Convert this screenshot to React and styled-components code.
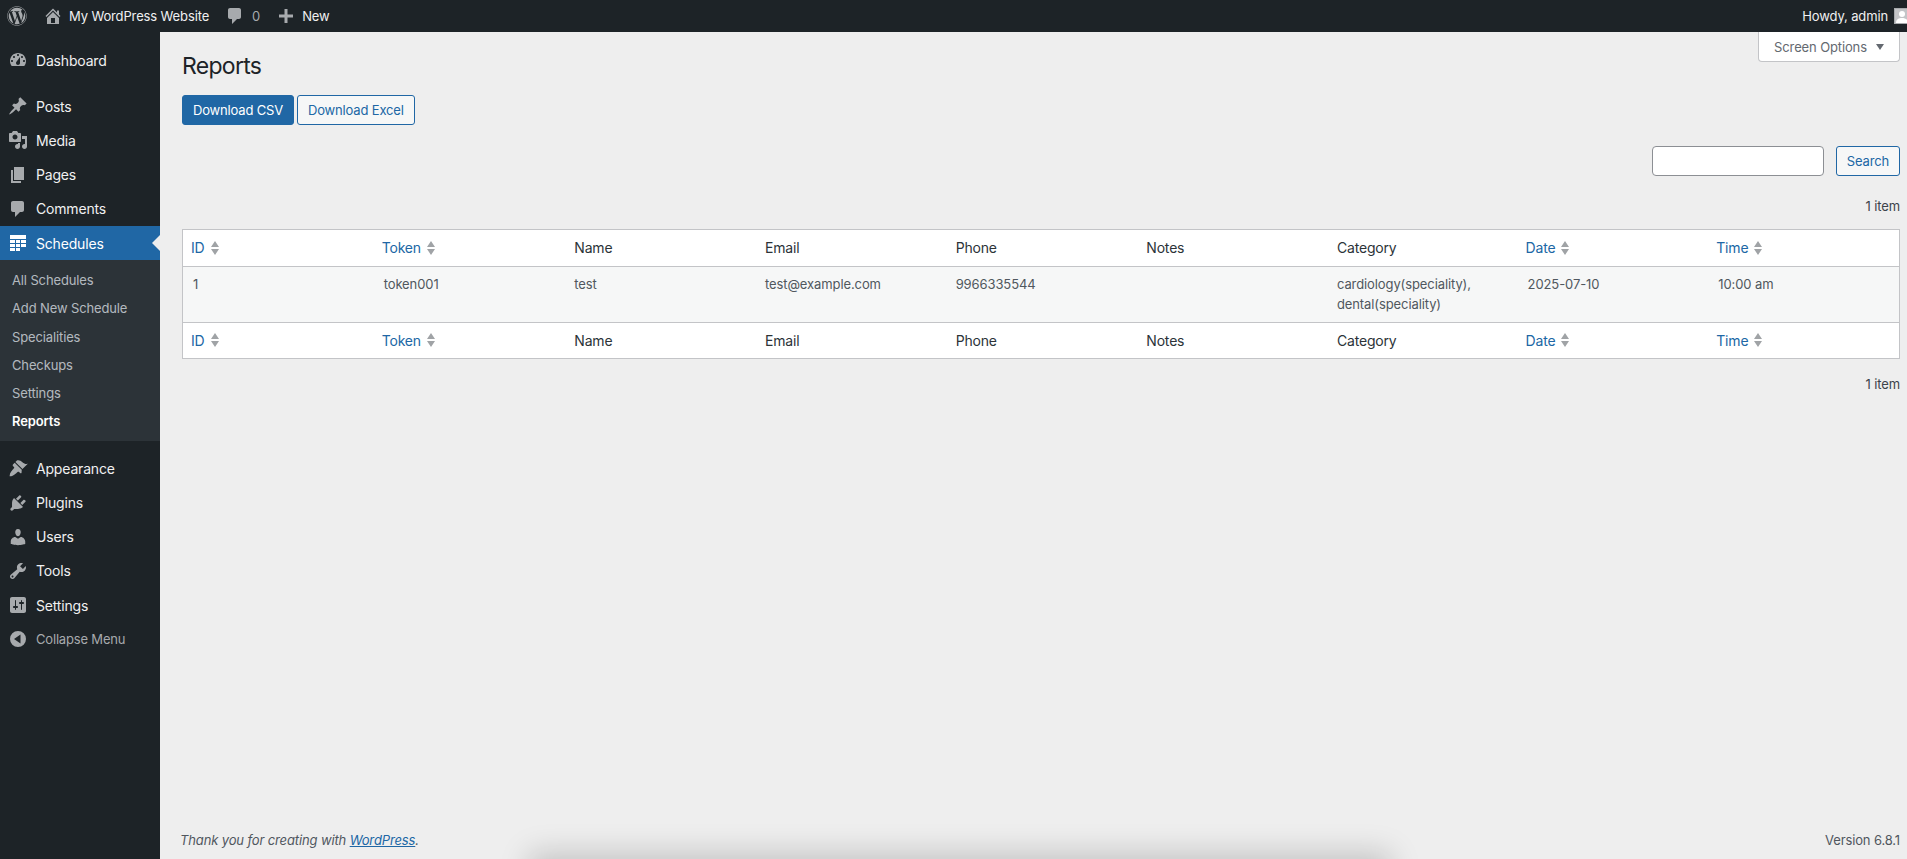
import styled, { createGlobalStyle } from "styled-components"
import { FaWordpress } from "react-icons/fa"

const BLUE = "#2067a5"

const icons = {
  home: "M16 8.5l1.53 1.53-1.06 1.06L10 4.62l-6.47 6.47-1.06-1.06L10 2.5l4 4v-2h2v4zm-6-2.46l6 5.99V18H4v-5.97zM12 17v-5H8v5h4z",
  comment: "M5 2h9c1.1 0 2 .9 2 2v7c0 1.1-.9 2-2 2h-2l-5 5v-5H5c-1.1 0-2-.9-2-2V4c0-1.1.9-2 2-2z",
  plus: "M17 8.5v3h-5.5V17h-3v-5.5H3v-3h5.5V3h3v5.5z",
  dashboard: "M3.76 16h12.48c1.1-1.37 1.76-3.11 1.76-5 0-4.42-3.58-8-8-8s-8 3.58-8 8c0 1.89.66 3.63 1.76 5zM10 4c.55 0 1 .45 1 1s-.45 1-1 1-1-.45-1-1 .45-1 1-1zM6 6c.55 0 1 .45 1 1s-.45 1-1 1-1-.45-1-1 .45-1 1-1zm8 0c.55 0 1 .45 1 1s-.45 1-1 1-1-.45-1-1 .45-1 1-1zm-5.37 5.55L12 7v6c0 1.1-.9 2-2 2s-2-.9-2-2c0-.57.24-1.08.63-1.45zM4 10c.55 0 1 .45 1 1s-.45 1-1 1-1-.45-1-1 .45-1 1-1zm12 0c.55 0 1 .45 1 1s-.45 1-1 1-1-.45-1-1 .45-1 1-1z",
  post: "M10.44 3.02l1.82-1.82 6.36 6.35-1.83 1.82c-1.05-.68-2.48-.57-3.41.36l-.75.75c-.92.93-1.04 2.35-.35 3.41l-1.83 1.82-2.41-2.41-2.8 2.79c-.42.42-3.38 2.71-3.8 2.29s1.86-3.39 2.28-3.81l2.79-2.79L4.1 9.36l1.83-1.82c1.05.69 2.48.57 3.4-.36l.75-.75c.93-.92 1.05-2.35.36-3.41z",
  media: "M13 11V4c0-.55-.45-1-1-1h-1.67L9 1H5L3.67 3H2c-.55 0-1 .45-1 1v7c0 .55.45 1 1 1h10c.55 0 1-.45 1-1zM7 4.5c1.38 0 2.5 1.12 2.5 2.5S8.38 9.5 7 9.5 4.5 8.38 4.5 7 5.62 4.5 7 4.5zM14 6h5v10.5c0 1.38-1.12 2.5-2.5 2.5S14 17.88 14 16.5s1.12-2.5 2.5-2.5c.17 0 .34.02.5.05V9h-3V6zm-4 8.05V13h2v3.5c0 1.38-1.12 2.5-2.5 2.5S7 17.88 7 16.5 8.12 14 9.5 14c.17 0 .34.02.5.05z",
  page: "M6 15V2h10v13H6zm-1 1h8v2H3V5h2v11z",
  schedule: "M2 2h16v4H2V2zm0 5h5v3H2V7zm6 0h4v3H8V7zm5 0h5v3h-5V7zM2 11h5v3H2v-3zm6 0h4v3H8v-3zM2 15h5v3H2v-3zm6 0h4v3H8v-3zm5-4h5v3h-5v-3z",
  appearance: "M14.48 11.06L7.41 3.99l1.5-1.5c.5-.56 2.3-.47 3.51.32 1.21.8 1.43 1.28 2.91 2.1 1.18.64 2.45 1.26 4.45.85zM13.77 11.77L6.7 4.7 4.93 6.47c-.39.39-.39 1.02 0 1.41l1.06 1.06c.39.39.39 1.03 0 1.42-.6.6-3.6 4-4 5.64-.5 2-.3 2.3-.3 2.3s.3.2 2.3-.3c1.64-.4 5.04-3.4 5.64-4 .39-.39 1.03-.39 1.42 0l1.06 1.06c.39.39 1.02.39 1.41 0z",
  plugin: "M13.11 4.36L9.87 7.6 8 5.73l3.24-3.24c.35-.34 1.05-.2 1.56.32.52.51.66 1.21.31 1.55zm-8 1.77l.91-1.12 9.01 9.01-1.19.84c-.71.71-2.63 1.16-3.82 1.16H6.14L4.9 17.26c-.59.59-1.54.59-2.12 0-.59-.58-.59-1.53 0-2.12l1.24-1.24v-3.88c0-1.13.4-3.19 1.09-3.89zm7.26 3.97l3.24-3.24c.34-.35 1.04-.21 1.55.31.52.51.66 1.21.31 1.55l-3.24 3.25z",
  users: "M10 9.25c-2.27 0-2.73-3.44-2.73-3.44C7 4.02 7.82 2 9.97 2c2.16 0 2.98 2.02 2.71 3.81 0 0-.41 3.44-2.68 3.44zm0 2.57L12.72 10c2.39 0 4.52 2.33 4.52 4.53v2.49s-3.65 1.13-7.24 1.13c-3.65 0-7.24-1.13-7.24-1.13v-2.49c0-2.25 1.94-4.48 4.47-4.48z",
  tools: "M16.68 9.77c-1.34 1.34-3.3 1.67-4.95.99l-5.41 6.52c-.99.99-2.59.99-3.58 0s-.99-2.59 0-3.57l6.52-5.42c-.68-1.65-.35-3.61.99-4.95 1.28-1.28 3.12-1.62 4.72-1.06l-2.89 2.89 2.82 2.82 2.86-2.87c.53 1.58.18 3.39-1.08 4.65zM3.81 16.21c.4.39 1.04.39 1.43 0 .4-.4.4-1.04 0-1.43-.39-.4-1.03-.4-1.43 0-.39.39-.39 1.03 0 1.43z",
  settings: "M18 16V4c0-1.1-.9-2-2-2H4c-1.1 0-2 .9-2 2v12c0 1.1.9 2 2 2h12c1.1 0 2-.9 2-2zM8 11h1c.55 0 1 .45 1 1s-.45 1-1 1H8v1.5c0 .28-.22.5-.5.5s-.5-.22-.5-.5V13H6c-.55 0-1-.45-1-1s.45-1 1-1h1V5.5c0-.28.22-.5.5-.5s.5.22.5.5V11zm5-2h-1c-.55 0-1-.45-1-1s.45-1 1-1h1V5.5c0-.28.22-.5.5-.5s.5.22.5.5V7h1c.55 0 1 .45 1 1s-.45 1-1 1h-1v5.5c0 .28-.22.5-.5.5s-.5-.22-.5-.5V9z",
  collapse: "M10 2a8 8 0 1 0 0 16 8 8 0 0 0 0-16zm2.5 3.5v9L6 10z",
}

const menuTop = [
  { label: "Posts", icon: "post" },
  { label: "Media", icon: "media" },
  { label: "Pages", icon: "page" },
  { label: "Comments", icon: "comment" },
]
const menuBottom = [
  { label: "Appearance", icon: "appearance" },
  { label: "Plugins", icon: "plugin" },
  { label: "Users", icon: "users" },
  { label: "Tools", icon: "tools" },
  { label: "Settings", icon: "settings" },
]
const subItems = ["All Schedules", "Add New Schedule", "Specialities", "Checkups", "Settings"]
const columns = [
  { label: "ID", sortable: true },
  { label: "Token", sortable: true },
  { label: "Name" },
  { label: "Email" },
  { label: "Phone" },
  { label: "Notes" },
  { label: "Category" },
  { label: "Date", sortable: true },
  { label: "Time", sortable: true },
]
const row = ["1", "token001", "test", "test@example.com", "9966335544", "", "cardiology(speciality), dental(speciality)", "2025-07-10", "10:00 am"]

function Dashicon({ name, size = 20 }) {
  return (
    <svg width={size} height={size} viewBox="0 0 20 20" fill="currentColor" fillRule="evenodd">
      <path d={icons[name]} />
    </svg>
  )
}

function SortArrows() {
  return (
    <SortSvg width="8" height="14" viewBox="0 0 8 14" fill="#a0a3a6">
      <path d="M4 0l4 6H0zM4 14L0 8h8z" />
    </SortSvg>
  )
}

function HeaderRow({ height }) {
  return (
    <tr>
      {columns.map((col) =>
        col.sortable ? (
          <SortTh key={col.label} $height={height}>
            <SortLink href="#">
              {col.label}
              <SortArrows />
            </SortLink>
          </SortTh>
        ) : (
          <Th key={col.label} $height={height}>
            {col.label}
          </Th>
        )
      )}
    </tr>
  )
}

export default function App() {
  return (
    <>
      <GlobalStyle />
      <AdminBar>
        <BarGroup>
          <LogoSlot>
            <FaWordpress size={20} />
          </LogoSlot>
          <BarItem>
            <BarIcon>
              <Dashicon name="home" />
            </BarIcon>
            My WordPress Website
          </BarItem>
          <BarItem>
            <BarIcon>
              <Dashicon name="comment" />
            </BarIcon>
            <Count>0</Count>
          </BarItem>
          <BarItem>
            <BarIcon>
              <Dashicon name="plus" />
            </BarIcon>
            New
          </BarItem>
        </BarGroup>
        <Howdy>
          Howdy, admin
          <Avatar>
            <svg width="14" height="14" viewBox="0 0 14 14" fill="#fff">
              <circle cx="7" cy="5" r="3" />
              <path d="M1 14c0-4 3-5 6-5s6 1 6 5z" />
            </svg>
          </Avatar>
        </Howdy>
      </AdminBar>
      <Layout>
        <Sidebar>
          <MenuItem>
            <MenuIcon>
              <Dashicon name="dashboard" />
            </MenuIcon>
            Dashboard
          </MenuItem>
          <Separator $height={12} />
          {menuTop.map((item) => (
            <MenuItem key={item.label}>
              <MenuIcon>
                <Dashicon name={item.icon} />
              </MenuIcon>
              {item.label}
            </MenuItem>
          ))}
          <ActiveItem>
            <ActiveIcon>
              <Dashicon name="schedule" />
            </ActiveIcon>
            Schedules
            <ActiveNotch />
          </ActiveItem>
          <SubMenu>
            {subItems.map((label) => (
              <SubItem key={label}>{label}</SubItem>
            ))}
            <SubItem $current>Reports</SubItem>
          </SubMenu>
          <Separator $height={10} />
          {menuBottom.map((item) => (
            <MenuItem key={item.label}>
              <MenuIcon>
                <Dashicon name={item.icon} />
              </MenuIcon>
              {item.label}
            </MenuItem>
          ))}
          <CollapseItem>
            <MenuIcon>
              <Dashicon name="collapse" />
            </MenuIcon>
            Collapse Menu
          </CollapseItem>
        </Sidebar>
        <Main>
          <TitleRow>
            <Title>Reports</Title>
            <ScreenOptions>
              Screen Options
              <Caret />
            </ScreenOptions>
          </TitleRow>
          <ButtonRow>
            <PrimaryButton>Download CSV</PrimaryButton>
            <SecondaryButton>Download Excel</SecondaryButton>
          </ButtonRow>
          <SearchRow>
            <SearchInput type="text" />
            <SecondaryButton>Search</SecondaryButton>
          </SearchRow>
          <ItemCount>1 item</ItemCount>
          <Table>
            <thead>
              <HeaderRow height={36} />
            </thead>
            <tbody>
              <tr>
                {row.map((value, i) => (
                  <Td key={i}>{value}</Td>
                ))}
              </tr>
            </tbody>
            <tfoot>
              <HeaderRow height={35} />
            </tfoot>
          </Table>
          <BottomCount>1 item</BottomCount>
          <Footer>
            <Thanks>
              Thank you for creating with <FooterLink href="#">WordPress</FooterLink>.
            </Thanks>
            <span>Version 6.8.1</span>
          </Footer>
          <WindowShadow />
        </Main>
      </Layout>
    </>
  )
}

const GlobalStyle = createGlobalStyle`
  html, body {
    margin: 0;
    height: 859px;
    overflow: hidden;
    background: #eeeeee;
    font-family: Inter, "Liberation Sans", sans-serif;
    -webkit-font-smoothing: antialiased;
  }
  * {
    box-sizing: border-box;
  }
`
const AdminBar = styled.header`
  height: 32px;
  background: #1d2327;
  color: #f0f0f1;
  font-size: 13px;
  letter-spacing: -0.13px;
  display: flex;
  justify-content: space-between;
  align-items: center;
`
const BarGroup = styled.div`
  display: flex;
  align-items: center;
`
const LogoSlot = styled.div`
  width: 35px;
  height: 32px;
  padding-left: 7px;
  color: #a7aaad;
  display: flex;
  align-items: center;
`
const BarItem = styled.div`
  display: flex;
  align-items: center;
  gap: 6px;
  padding: 0 8px;
  white-space: nowrap;
  &:first-of-type {
    padding-left: 7px;
  }
`
const BarIcon = styled.span`
  color: #a7aaad;
  display: flex;
`
const Count = styled.span`
  color: #a7aaad;
  margin-left: 1px;
`
const Howdy = styled.div`
  display: flex;
  align-items: center;
  gap: 6px;
  margin-right: -3px;
`
const Avatar = styled.span`
  width: 16px;
  height: 16px;
  background: #c3c4c7;
  border: 1px solid #a7aaad;
  display: flex;
  overflow: hidden;
`
const Layout = styled.div`
  display: flex;
  height: 827px;
`
const Sidebar = styled.nav`
  width: 160px;
  flex: none;
  background: #1d2327;
  padding-top: 11px;
  color: #f0f0f1;
  font-size: 14px;
  letter-spacing: -0.18px;
`
const Separator = styled.div`
  height: ${(p) => p.$height}px;
`
const MenuItem = styled.div`
  height: 34.2px;
  display: flex;
  align-items: center;
`
const MenuIcon = styled.span`
  width: 36px;
  padding-left: 8px;
  color: #a7aaad;
  display: flex;
`
const ActiveItem = styled(MenuItem)`
  background: ${BLUE};
  color: #fff;
  position: relative;
`
const ActiveIcon = styled(MenuIcon)`
  color: #fff;
`
const ActiveNotch = styled.span`
  position: absolute;
  right: 0;
  top: 9px;
  border: 8px solid transparent;
  border-left: 0;
  border-right-color: #eeeeee;
`
const CollapseItem = styled(MenuItem)`
  color: #a7aaad;
  font-size: 13px;
`
const SubMenu = styled.div`
  background: #2c3338;
  padding: 6px 0 6px;
`
const SubItem = styled.div`
  height: 28.2px;
  padding-left: 12px;
  display: flex;
  align-items: center;
  font-size: 13px;
  letter-spacing: -0.13px;
  color: ${(p) => (p.$current ? "#fff" : "rgba(240, 246, 252, 0.7)")};
  font-weight: ${(p) => (p.$current ? 600 : 400)};
`
const Main = styled.main`
  flex: 1;
  min-width: 0;
  padding: 0 7px 0 22px;
  display: flex;
  flex-direction: column;
  position: relative;
  overflow: hidden;
  font-size: 13px;
  color: #3c434a;
`
const TitleRow = styled.div`
  display: flex;
  justify-content: space-between;
  align-items: flex-start;
  height: 63px;
`
const Title = styled.h1`
  margin: 19px 0 0;
  font-size: 23px;
  line-height: 30px;
  font-weight: 400;
  letter-spacing: -0.7px;
  color: #1d2327;
`
const ScreenOptions = styled.div`
  width: 142px;
  height: 30px;
  background: #fff;
  border: 1px solid #c3c4c7;
  border-top: 0;
  border-radius: 0 0 4px 4px;
  color: #646970;
  display: flex;
  align-items: center;
  justify-content: center;
  gap: 9px;
  letter-spacing: -0.13px;
`
const Caret = styled.span`
  border: 4px solid transparent;
  border-bottom: 0;
  border-top: 6px solid #646970;
`
const ButtonRow = styled.div`
  display: flex;
  gap: 3px;
`
const PrimaryButton = styled.button`
  height: 30px;
  width: 112px;
  padding: 0;
  background: ${BLUE};
  border: 1px solid ${BLUE};
  border-radius: 3px;
  color: #fff;
  font: inherit;
  font-size: 13px;
  letter-spacing: -0.16px;
`
const SecondaryButton = styled.button`
  height: 30px;
  padding: 0 10px;
  background: #f6f7f7;
  border: 1px solid ${BLUE};
  border-radius: 3px;
  color: ${BLUE};
  font: inherit;
  font-size: 13px;
  letter-spacing: -0.16px;
`
const SearchRow = styled.div`
  display: flex;
  justify-content: flex-end;
  gap: 12px;
  margin-top: 21px;
`
const SearchInput = styled.input`
  width: 172px;
  height: 30px;
  background: #fff;
  border: 1px solid #8c8f94;
  border-radius: 4px;
`
const ItemCount = styled.div`
  text-align: right;
  line-height: 20px;
  margin-top: 20px;
  margin-bottom: 13px;
  letter-spacing: -0.1px;
`
const BottomCount = styled(ItemCount)`
  margin-top: 15px;
  margin-bottom: 0;
`
const Table = styled.table`
  width: 100%;
  table-layout: fixed;
  border-collapse: separate;
  border-spacing: 0;
  background: #fff;
  border: 1px solid #c3c4c7;
  tbody td {
    border-top: 1px solid #c3c4c7;
    border-bottom: 1px solid #c3c4c7;
  }
`
const Th = styled.th`
  height: ${(p) => p.$height}px;
  padding: 0 10px 1px;
  text-align: left;
  font-weight: 400;
  font-size: 14px;
  letter-spacing: -0.18px;
  color: #2c3338;
`
const SortTh = styled(Th)`
  padding: 0 8px 1px;
`
const SortLink = styled.a`
  color: ${BLUE};
  text-decoration: none;
  display: inline-flex;
  align-items: center;
  gap: 6px;
`
const SortSvg = styled.svg`
  flex: none;
`
const Td = styled.td`
  height: 57px;
  padding: 8px 10px;
  vertical-align: top;
  background: #f6f7f7;
  font-size: 13px;
  line-height: 19.5px;
  letter-spacing: -0.1px;
  color: #50575e;
`
const Footer = styled.footer`
  margin-top: auto;
  margin-left: -2px;
  height: 27px;
  display: flex;
  justify-content: space-between;
  color: #50575e;
  letter-spacing: -0.13px;
`
const Thanks = styled.span`
  font-style: italic;
`
const FooterLink = styled.a`
  color: ${BLUE};
`
const WindowShadow = styled.div`
  position: absolute;
  bottom: -30px;
  left: 375px;
  width: 850px;
  height: 30px;
  box-shadow: 0 0 30px 6px rgba(0, 0, 0, 0.18);
`
